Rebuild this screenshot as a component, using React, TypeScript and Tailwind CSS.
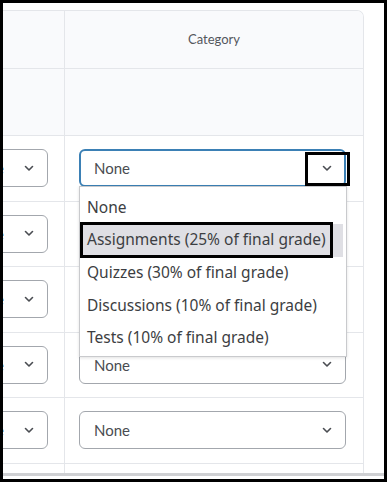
import React from "react";

const Chevron = () => (
  <svg width="10" height="7" viewBox="0 0 10 7" className="shrink-0">
    <polyline points="1.5,1.5 5,5 8.5,1.5" fill="none" stroke="#4a4d52" strokeWidth="1.6" strokeLinecap="round" strokeLinejoin="round" />
  </svg>
);

const LeftSelect = () => (
  <div className="h-[65.5px] border-b border-[#e4e6ea] flex items-center justify-end pr-[16px] overflow-hidden">
    <div className="h-[38px] w-[95px] shrink-0 border border-[#a3a7ad] rounded-[6px] flex items-center justify-between pl-[14px] pr-[13px] bg-white">
      <span className="text-[15px] text-[#494c51]">None</span>
      <Chevron />
    </div>
  </div>
);

const CatSelect = ({ focus }: { focus?: boolean }) => (
  <div className="h-[65.5px] border-b border-[#e4e6ea] flex items-center pl-[14px]">
    <div
      className={
        focus
          ? "h-[38px] w-[267px] border-2 border-[#3b80b5] rounded-[6px] flex items-center justify-between pl-[13px] pr-[12px] bg-white"
          : "h-[38px] w-[267px] border border-[#a3a7ad] rounded-[6px] flex items-center justify-between pl-[14px] pr-[13px] bg-white"
      }
    >
      <span className="text-[15px] text-[#494c51]">None</span>
      <Chevron />
    </div>
  </div>
);

export default function App() {
  const options = [
    "None",
    "Assignments (25% of final grade)",
    "Quizzes (30% of final grade)",
    "Discussions (10% of final grade)",
    "Tests (10% of final grade)",
  ];
  return (
    <div className="w-[387px] h-[482px] border-[3px] border-black bg-white relative overflow-hidden font-['Lato',sans-serif]">
      <div className="flex flex-col h-full pt-[7px]">
        <div className="w-[361px] flex-1 border-t border-r border-[#e4e6ea] rounded-tr-[7px] overflow-hidden flex">
          <div className="w-[62px] border-r border-[#e4e6ea] flex flex-col">
            <div className="h-[58px] bg-[#f9fafc] border-b border-[#e4e6ea]" />
            <div className="h-[67px] bg-[#f9fafc] border-b border-[#e4e6ea]" />
            <LeftSelect />
            <LeftSelect />
            <LeftSelect />
            <LeftSelect />
            <LeftSelect />
          </div>
          <div className="flex-1 flex flex-col">
            <div className="h-[58px] bg-[#f9fafc] border-b border-[#e4e6ea] flex items-center justify-center">
              <span className="text-[13px] text-[#54575c]">Category</span>
            </div>
            <div className="h-[67px] bg-[#f9fafc] border-b border-[#e4e6ea]" />
            <CatSelect focus />
            <CatSelect />
            <CatSelect />
            <CatSelect />
            <CatSelect />
          </div>
        </div>
        <div className="h-[3px] bg-[#cfd0d3]" />
        <div className="h-[3px]" />
      </div>

      {/* dropdown list */}
      <div className="absolute left-[76px] top-[183px] w-[268px] h-[171px] bg-white border border-[#c9cacd] shadow-[0_1px_3px_rgba(0,0,0,0.12)] pt-[4px] font-['Noto_Sans',sans-serif]">
        {options.map((o, i) => (
          <div
            key={o}
            className={
              i === 1
                ? "h-[33px] mr-[3px] bg-[#dfdfe4] flex items-center pl-[7px] text-[15.5px] text-[#3c3e42]"
                : "h-[32.5px] flex items-center pl-[7px] text-[15.5px] text-[#3c3e42]"
            }
          >
            {o}
          </div>
        ))}
      </div>

      {/* annotation boxes */}
      <div className="absolute left-[77px] top-[219px] w-[253px] h-[36px] border-[3px] border-black" />
      <div className="absolute left-[302px] top-[149px] w-[45px] h-[34px] border-[3px] border-black" />
    </div>
  );
}
